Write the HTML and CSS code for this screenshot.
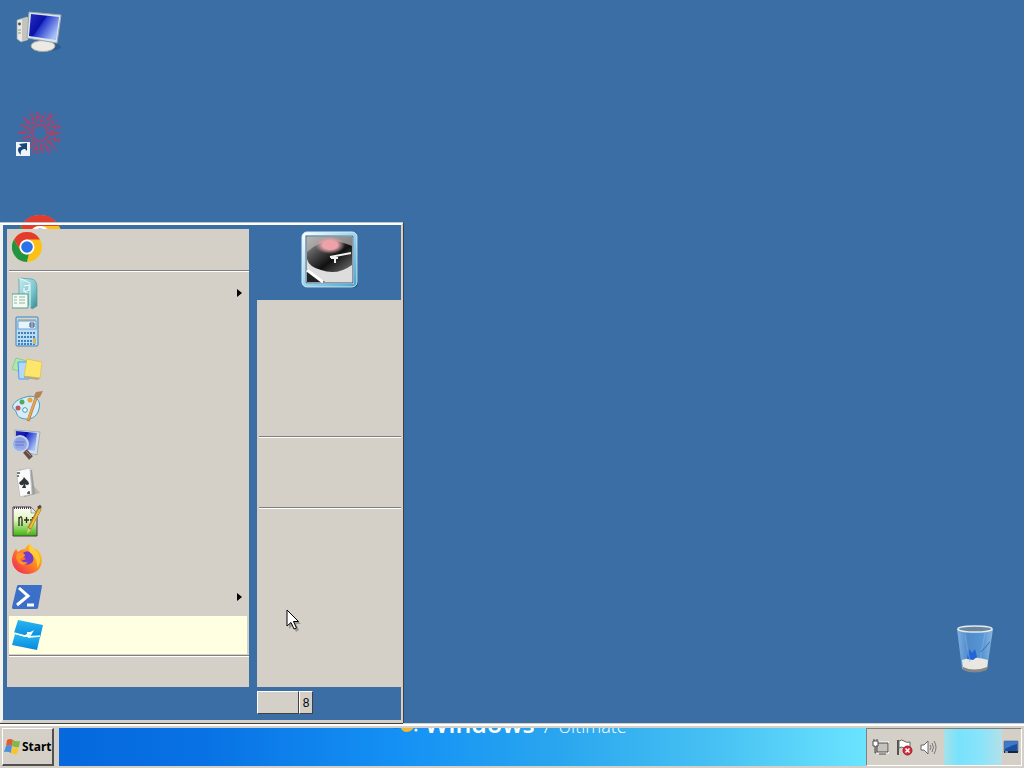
FILE: index.html
```html
<!DOCTYPE html>
<html lang="en">
<head>
<meta charset="utf-8">
<meta name="viewport" content="width=device-width, initial-scale=1">
<title>Desktop</title>
<link rel="stylesheet" href="styles.css">
</head>
<body>
<svg width="0" height="0" class="defs" aria-hidden="true">
  <defs>
    <symbol id="chrome" viewBox="0 0 30 30">
      <circle cx="15" cy="15" r="15" fill="#fbc116"/>
      <path d="M2 7.500A15 15 0 0 1 28 7.500H15A7.500 7.500 0 0 0 8.500 18.750Z" fill="#e33b2e"/>
      <path d="M2 7.500L8.500 18.750A7.500 7.500 0 0 0 17 22.200L15 30A15 15 0 0 1 2 7.500Z" fill="#229342"/>
      <path d="M15 30L21.500 18.750L17 22.200Z" fill="#fbc116"/>
      <circle cx="15" cy="15" r="7.500" fill="#fff"/><circle cx="15" cy="15" r="5.800" fill="#2b72e8"/>
    </symbol>
    <linearGradient id="screen" x1="0" y1="0" x2="1" y2=".6"><stop offset="0" stop-color="#2430c0"/><stop offset=".45" stop-color="#0c10a8"/><stop offset=".5" stop-color="#2438cc"/><stop offset="1" stop-color="#a8c0f8"/></linearGradient>
    <linearGradient id="teal" x1="0" y1="0" x2="1" y2="1"><stop offset="0" stop-color="#c8eef0"/><stop offset=".6" stop-color="#7cc4cc"/><stop offset="1" stop-color="#348890"/></linearGradient>
    <linearGradient id="green" x1="0" y1="0" x2="0" y2="1"><stop offset="0" stop-color="#fff"/><stop offset=".45" stop-color="#e0f4b8"/><stop offset="1" stop-color="#38b408"/></linearGradient>
    <linearGradient id="fire" x1="1" y1="0" x2="0" y2="1"><stop offset="0" stop-color="#ffe23c"/><stop offset=".45" stop-color="#ff8b20"/><stop offset="1" stop-color="#f0185c"/></linearGradient>
    <linearGradient id="vinyl" x1="0" y1="0" x2="1" y2="1"><stop offset="0" stop-color="#aaa"/><stop offset=".3" stop-color="#555"/><stop offset=".6" stop-color="#111"/><stop offset="1" stop-color="#777"/></linearGradient>
    <radialGradient id="label"><stop offset=".5" stop-color="#eca2a8"/><stop offset="1" stop-color="#c8a0a0" stop-opacity="0"/></radialGradient>
    <linearGradient id="frame" x1="0" y1="0" x2="1" y2="1"><stop offset="0" stop-color="#fff"/><stop offset=".5" stop-color="#9cd4ec"/><stop offset="1" stop-color="#48a4d0"/></linearGradient>
    <linearGradient id="glass" x1="0" y1="0" x2="1" y2="0"><stop offset="0" stop-color="#8cbcec"/><stop offset=".3" stop-color="#5490d0"/><stop offset=".7" stop-color="#5c9cdc"/><stop offset="1" stop-color="#98c4e8"/></linearGradient>
    <linearGradient id="cyan" x1="0" y1="0" x2="0" y2="1"><stop offset="0" stop-color="#28b8f0"/><stop offset="1" stop-color="#0888e0"/></linearGradient>
  </defs>
</svg>

<main class="desktop">
  <button class="shortcut computer" aria-label="Computer">
    <svg width="50" height="44" viewBox="0 0 50 44">
      <path d="M3 11L13 8V31L7 33L3 30Z" fill="#e8e8e4" stroke="#98a0a4" stroke-width=".7"/>
      <path d="M8 10L14 8V31L8 32Z" fill="#c4c4bc"/><circle cx="5.500" cy="15" r="1.400" fill="#405058"/>
      <path d="M4 21h3M4 24h3" stroke="#909898"/>
      <ellipse cx="32" cy="38" rx="15" ry="4" fill="#234c78" opacity=".5"/>
      <path d="M26 29L38 31L36 37H26Z" fill="#d0d4d0"/>
      <ellipse cx="29" cy="37" rx="12" ry="5.500" fill="#eceae4" stroke="#a8a8a0"/>
      <path d="M15 3L47 6L43 34L13 29Z" fill="#dce4ec" stroke="#98a8b4"/>
      <path d="M17 5L45 8L42 31L15 27Z" fill="url(#screen)"/>
    </svg>
  </button>
  <button class="shortcut spark" aria-label="Shortcut">
    <svg width="50" height="50" viewBox="0 0 50 50">
      <g fill="none" stroke="#c23a60" stroke-opacity=".85">
        <circle cx="26" cy="24" r="8" stroke-width="3" stroke-dasharray="2 1"/>
        <circle cx="26" cy="24" r="12" stroke-width="3" stroke-dasharray="3 2 1 2"/>
        <circle cx="26" cy="24" r="16" stroke-width="3" stroke-dasharray="2 3 3 3"/>
        <circle cx="26" cy="24" r="20" stroke-width="3" stroke-dasharray="1 5 2 6"/>
        <path d="M26 10V4M35 14L42 6M39 24H47M35 33L43 42M26 37V45M17 14L9 7M12 24H5M21 11L17 2M32 11L37 3M38 18L45 15M38 30L46 33M31 36L35 45M21 37L18 44M14 18L6 15"/>
      </g>
      <path d="M2 33H16V47H2Z" fill="#eef4fa"/>
      <path d="M7 46C2 42 4 37 8 38L5 35L13 34V42L11 40C8 40 6 42 7 46Z" fill="#174879"/>
    </svg>
  </button>
  <button class="shortcut browser" aria-label="Chrome"><svg width="44" height="44"><use href="#chrome"/></svg></button>
  <button class="shortcut bin" aria-label="Recycle Bin">
    <svg width="40" height="50" viewBox="0 0 40 50">
      <path d="M2 5L7 45Q19 51 32 45L38 5Z" fill="url(#glass)" opacity=".85"/>
      <path d="M7 36Q19 31 33 36L32 45Q19 50 8 45Z" fill="#e8e8e0"/><path d="M8 43Q19 48 32 43V46Q19 51 8 46Z" fill="#868888"/>
      <path d="M14 25l3 4 3-4 2 8-4 3-6-1z" fill="#2364d8"/><path d="M10 11L15 38M30 9L25 35" stroke="#86b4e4" opacity=".6"/>
      <path d="M26 28L35 18" stroke="#3a70a8"/>
      <ellipse cx="20" cy="5" rx="17" ry="3" fill="#6b859c" stroke="#e4eaee" stroke-width="1.500"/>
    </svg>
  </button>

  <section class="start-menu" aria-label="Start menu">
    <div class="programs">
      <button class="program pinned" aria-label="Chrome"><svg width="30" height="30"><use href="#chrome"/></svg></button>
      <hr class="rule">
      <button class="program" aria-label="Getting started">
        <svg width="30" height="34" viewBox="0 0 30 34"><path d="M7 2L20 3Q25 4 25 12V30L20 33L17 29L7 20Z" fill="url(#teal)" stroke="#4c9ca4" stroke-width=".7"/><path d="M7 2L18 7V31" fill="none" stroke="#e4fcfc"/><path d="M12 10l5-1v5l-5 2v-4M13 17h3" stroke="#fff" fill="none"/><path d="M0 18H16V32H0Z" fill="#f2faf2" stroke="#579d94"/><path d="M2 21h3M7 21h6M2 24h3M7 24h6M2 27h3M7 27h6" stroke="#8eb4a4"/></svg>
        <svg class="arrow" width="5" height="8"><path d="M0 0L5 4L0 8Z"/></svg>
      </button>
      <button class="program" aria-label="Calculator">
        <svg width="30" height="32" viewBox="0 0 30 32"><rect x="4" y="2" width="22" height="29" rx="1" fill="#bcdcf4" stroke="#3d83b5"/><path d="M6 4H24V6H6Z" fill="#c2b48e"/><rect x="6" y="6" width="18" height="8" fill="#e8f4fc" stroke="#6ba1c8"/><path d="M18 8h4v4h-4zM18 10h4" fill="none" stroke="#3d5389"/><path d="M6 18H24M6 22H24M6 26H24M6 29H24" stroke="#3e82bc" stroke-width="2" stroke-dasharray="2 1"/><path d="M21 23h3v6h-3z" fill="#c8b878"/></svg>
      </button>
      <button class="program" aria-label="Sticky Notes">
        <svg width="32" height="30" viewBox="0 0 32 30"><path d="M4 4L15 7L12 19L0 15Z" fill="#b0e8a8" stroke="#64c47c" stroke-width=".6"/><path d="M6 8H17V25H7Z" fill="#b4d8fc" stroke="#4c9cf0"/><path d="M15 5L30 8L28 24L12 22Z" fill="#fce66c" stroke="#d8b83c" stroke-width=".6"/><path d="M12 22L28 24L26 26L12 24Z" fill="#b7ab83"/></svg>
      </button>
      <button class="program" aria-label="Paint">
        <svg width="32" height="32" viewBox="0 0 32 32"><path d="M14 6C22 3 30 9 27 18C25 27 17 30 9 27C4 25 5 21 3 19C-2 17 1 9 14 6Z" fill="#d4edf6" stroke="#4b9cbd"/><circle cx="6" cy="17" r="2.500" fill="#b85864"/><circle cx="10" cy="11" r="2.500" fill="#4eaa60"/><circle cx="18" cy="9" r="2.500" fill="#e7a53a"/><circle cx="13" cy="19" r="2.300" fill="#fff" stroke="#4b97b0"/><path d="M16 30L24 7" stroke="#b87c3c" stroke-width="3"/><path d="M16 29L24 7" stroke="#e8a451" stroke-width="2"/><path d="M22 5L24 1L31 0L28 6L24 8Z" fill="#b48458"/></svg>
      </button>
      <button class="program" aria-label="Magnifier">
        <svg width="32" height="34" viewBox="0 0 32 34"><path d="M3 2L28 4L25 27L4 22Z" fill="#d2dfeb" stroke="#a3aeb8"/><path d="M4 3L25 5L23 23L4 20Z" fill="url(#screen)"/><circle cx="8" cy="16" r="8" fill="#9caee8" fill-opacity=".92" stroke="#c6d3e3" stroke-width="2"/><path d="M3 14H13M3 17H12" stroke="#5b7ccb"/><path d="M13 23L19 30" stroke="#644c48" stroke-width="5"/><path d="M13 22L19 28" stroke="#a98579"/></svg>
      </button>
      <button class="program" aria-label="Solitaire">
        <svg width="30" height="34" viewBox="0 0 30 34"><path d="M12 31L28 27L22 20Z" fill="#bab5ae"/><path d="M8 3L20 4L23 28L12 31Z" fill="#999e9e"/><path d="M4 5L18 2L20 28L8 31Z" fill="#fafafa" stroke="#c3c3c3"/><path d="M12 11C14 14 17 15 17 18Q15 20 13 18L14 22H10L12 18Q9 21 7 17C8 15 11 14 12 11Z" fill="#303638"/><path d="M5 7h3M6 9v2M17 25v3M15 27h3" stroke="#505454" stroke-width="1.500"/></svg>
      </button>
      <button class="program" aria-label="Notepad++">
        <svg width="32" height="34" viewBox="0 0 32 34"><path d="M1 3H19L25 9V32H1Z" fill="url(#green)" stroke="#535" stroke-width="1"/><path d="M2 4H19" stroke="#444" stroke-dasharray="1 1" stroke-width="2"/><path d="M19 3V9H25Z" fill="#e7e7e7" stroke="#777" stroke-width=".6"/><path d="M7 22V13M7 15Q10 10 10 16V22M12 16H17M14.500 13V19M18 16H23M20.500 13V19" fill="none" stroke="#252d20" stroke-width="1.300"/><path d="M17 25L28 4" stroke="#a8842c" stroke-width="4"/><path d="M18 24L28 5" stroke="#f0bb36" stroke-width="2"/><path d="M26 4L29 2" stroke="#54483c" stroke-width="3"/><path d="M16 24L19 26L15 30Z" fill="#e6bf8c"/></svg>
      </button>
      <button class="program" aria-label="Firefox">
        <svg width="30" height="32" viewBox="0 0 30 32"><path d="M4 6L6 9Q9 6 13 6Q15 2 18 1Q20 5 23 7V5Q30 10 30 17C30 26 23 31 15 31S0 25 0 17Q0 11 4 6Z" fill="url(#fire)"/><path d="M9 12Q15 5 20 11Q24 18 18 21Q12 23 9 18L14 16Z" fill="#743bd1"/><path d="M5 10Q13 9 13 13L8 16Q10 20 16 19Q11 25 6 19Q3 15 5 10Z" fill="#ff9426"/><path d="M18 1Q20 5 25 9Q31 17 25 25Q26 17 20 11Q15 8 18 1Z" fill="#ffcf3a"/></svg>
      </button>
      <button class="program" aria-label="PowerShell">
        <svg width="32" height="26" viewBox="0 0 32 26"><path d="M6 1H29Q30 1 30 2L26 24Q26 25 24 25H1Q0 25 0 23L5 2Z" fill="#3c70c8"/><path d="M7 4L16 12L5 21M15 21H22" fill="none" stroke="#fff" stroke-width="3"/></svg>
        <svg class="arrow" width="5" height="8"><path d="M0 0L5 4L0 8Z"/></svg>
      </button>
      <button class="program selected" aria-label="Snap">
        <svg width="31" height="32" viewBox="0 0 31 32"><path d="M6 1L31 6L28 19L17 16L19 13H15V17L2 14Z" fill="url(#cyan)"/><path d="M3 15L13 18H17L18 15L28 18L25 31L0 26Z" fill="url(#cyan)"/><path d="M2 14L13 17L20 13L17 18L28 17" fill="none" stroke="#f0ffff" stroke-width="1.500"/></svg>
      </button>
      <hr class="rule">
    </div>
    <div class="places">
      <div class="portrait">
        <svg width="58" height="58" viewBox="0 0 58 58"><rect x="2" y="3" width="55" height="54" rx="5" fill="#244a70"/><rect x="1" y="1" width="55" height="55" rx="5" fill="url(#frame)" stroke="#c9efff"/><rect x="4" y="4" width="49" height="49" fill="#fff"/><rect x="5" y="5" width="47" height="47" fill="#ddd" stroke="#27587c"/><path d="M6 6H51V34Q36 45 20 39Q8 36 6 28Z" fill="url(#vinyl)"/><path d="M6 6H51V15Q25 3 6 21Z" fill="#b9b7b7" opacity=".7"/><ellipse cx="29" cy="14" rx="15" ry="9" fill="url(#label)"/><path d="M29 26L50 22M30 27H37M34 26V32" stroke="#f1f1f1" stroke-width="2"/><path d="M6 38L24 51H6Z" fill="#222"/><path d="M6 39L22 51" stroke="#fff" stroke-width="3"/></svg>
      </div>
      <nav class="links" aria-label="Places">
        <div class="group folders"></div><hr class="rule">
        <div class="group games"></div><hr class="rule">
        <div class="group settings"></div>
      </nav>
      <div class="power">
        <button class="shutdown" aria-label="Shut down"></button><button class="more">8</button>
      </div>
    </div>
  </section>
  <svg class="pointer" width="16" height="24" viewBox="0 0 16 24" aria-hidden="true"><path d="M3 3V20L7 16L10 23L13 21L10 15H15Z" fill="#0004"/><path d="M1 1V17L5 13.500L8 20L10.500 19L7.500 12.500H12.500Z" fill="#fff" stroke="#000"/></svg>
</main>

<footer class="taskbar">
  <button class="start">
    <svg width="17" height="17" viewBox="0 0 17 17"><path d="M3 2Q6 0 9 2L8 8Q5 6 2 8Z" fill="#e35b2d"/><path d="M9 2Q12 4 16 3L15 9Q12 10 8 8Z" fill="#83b74b"/><path d="M2 8Q5 6 8 8L7 15Q4 13 0 14Z" fill="#4a8fe0"/><path d="M8 9Q12 11 15 9L13 16Q10 17 7 15Z" fill="#f7c52d"/></svg>
    Start
  </button>
  <div class="band">
    <div class="edition"><svg class="flag" width="28" height="8" viewBox="0 0 28 8"><path d="M0 1Q5 4 9 2V1Z" fill="#2c75b4"/><path d="M11 1H24Q22 6 16 6Q11 5 11 1Z" fill="#f2b632"/><circle cx="26" cy="4" r="1.500" fill="#fff"/></svg><span class="brand">Windows</span><span class="seven">7</span><span class="tier">Ultimate</span></div>
  </div>
  <div class="tray">
    <button class="tray-item" aria-label="Network"><svg width="17" height="17" viewBox="0 0 17 17"><path d="M5 4H16V13H5Z" fill="#d4d0c8" stroke="#fff" stroke-width="3"/><path d="M5 4H16V13H5ZM7 15H14" fill="#c6c3bd" stroke="#4d4d4d"/><path d="M1 2H6V7H4V14H3V7H1Z" fill="#fff" stroke="#4d4d4d"/><path d="M2 0V2M5 0V2" stroke="#444"/></svg></button>
    <button class="tray-item" aria-label="Action center"><svg width="17" height="17" viewBox="0 0 17 17"><path d="M2 1V16" stroke="#555" stroke-width="2"/><path d="M3 2Q6 0 8 2T14 3V10Q10 11 8 9T3 9Z" fill="#fff" stroke="#666"/><circle cx="11.500" cy="11.500" r="4.500" fill="#d52c3c" stroke="#992333"/><path d="M9.500 9.500L13.500 13.500M13.500 9.500L9.500 13.500" stroke="#fff" stroke-width="1.500"/></svg></button>
    <button class="tray-item" aria-label="Volume"><svg width="17" height="17" viewBox="0 0 17 17"><path d="M1 6H4L8 2V15L4 11H1Z" fill="#fff" stroke="#666"/><path d="M10 6Q12 8 10 11M12 4Q15 8 12 13M14 2Q18 8 14 15" fill="none" stroke="#777"/></svg></button>
    <div class="clock"></div>
    <button class="show-desktop" aria-label="Show desktop"><svg width="16" height="14" viewBox="0 0 16 14"><path d="M1 1H15V12H1Z" fill="#1c4ea0" stroke="#788ba7"/><path d="M2 2H14V4Q9 5 2 9Z" fill="#397bd0"/><path d="M1 12H15" stroke="#17243c" stroke-width="2"/><path d="M2 12h3" stroke="#e8f8ff"/></svg></button>
  </div>
</footer>
</body>
</html>
```

FILE: styles.css
```css
* { box-sizing: border-box; }
body {
  margin: 0;
  min-height: 100vh;
  display: flex;
  flex-direction: column;
  background: #3a6ea5;
  color: #000;
  font: 12px "Noto Sans", sans-serif;
}
button { margin: 0; padding: 0; border: 0; background: none; color: inherit; font: inherit; }
svg { display: block; flex: none; }
.defs { position: absolute; }

.desktop { position: relative; flex: 1; min-height: 520px; overflow: hidden; }
.shortcut { position: absolute; }
.computer { left: 14px; top: 9px; }
.spark { left: 14px; top: 109px; }
.browser { left: 18px; top: 215px; }
.bin { right: 29px; bottom: 50px; }
.pointer { position: absolute; left: 286px; top: 609px; }

.start-menu {
  position: absolute;
  left: 0;
  bottom: 1px;
  display: flex;
  gap: 8px;
  width: 403px;
  padding: 4px 0 0 4px;
  border: solid;
  border-width: 2px 2px 3px 3px;
  border-color: #fff #d4d0c8 #d4d0c8 #f4f3f0;
  background: linear-gradient(#d4d0c8, #d4d0c8) 4px 4px / 242px 458px no-repeat;
  box-shadow: 0 -1px #b8c4cc, 1px 0 #404040, 0 1px #404040;
}
.programs { flex: 0 0 242px; padding: 0 0 0 2px; display: flex; flex-direction: column; }
.program { display: flex; align-items: center; justify-content: space-between; height: 38px; padding: 0 7px 0 3px; }
.pinned { height: 36px; }
.pinned + .rule { margin: 5px 0 2px; }
.selected { margin-right: 2px; background: #ffffe1; }
.rule { width: 100%; height: 2px; margin: 1px 0; border: 0; border-top: 1px solid #808080; border-bottom: 1px solid #fff; }
.places { flex: 1; display: flex; flex-direction: column; }
.portrait { display: flex; justify-content: center; height: 71px; padding: 2px 0 0 1px; }
.links { padding-left: 2px; background: #d4d0c8; }
.links .rule { margin: 0; }
.folders { height: 136px; }
.games { height: 69px; }
.settings { height: 178px; }
.power { display: flex; height: 33px; padding: 4px 0 6px; }
.shutdown, .more { border: 1px solid #fff; border-right-color: #404040; border-bottom-color: #404040; background: #d4d0c8; }
.shutdown { width: 42px; }
.more { width: 14px; font-family: "Liberation Sans", sans-serif; }

.taskbar {
  display: flex;
  height: 44px;
  padding: 2px;
  border-top: 2px solid #fff;
  background: #d4d0c8;
  box-shadow: 0 -1px #d4d0c8;
}
.start {
  display: flex;
  align-items: center;
  gap: 1px;
  width: 52px;
  margin-right: 5px;
  padding-left: 1px;
  border: 1px solid #fff;
  border-right: 2px solid #505050;
  border-bottom: 2px solid #505050;
  font-weight: 700;
}
.band { flex: 1; background: linear-gradient(90deg, #0568dd 0%, #0872e4 18%, #1592f5 43%, #2aa6ef 62%, #48c2f3 82%, #6be4ff 100%); overflow: hidden; }
.edition { display: flex; align-items: baseline; height: 21px; margin-top: -15px; padding-left: 41%; color: #fff; font-family: "Open Sans", sans-serif; line-height: 20px; white-space: nowrap; }
.flag { align-self: flex-end; }
.brand { margin-left: 7px; font-size: 25px; font-weight: 600; }
.seven { margin-left: 6px; font-size: 20px; font-weight: 300; }
.tier { margin-left: 6px; font-size: 18px; font-weight: 300; }
.tray {
  display: flex;
  align-items: center;
  flex: 0 0 156px;
  padding-left: 5px;
  border: 1px solid #808080;
  border-right-color: #fff;
  border-bottom-color: #fff;
}
.tray-item { width: 24px; }
.clock { flex: 1; align-self: stretch; background: linear-gradient(90deg, #a4e2e8, #78e2fc 25%, #8ae4fa 65%, #b4e0e8); }
.show-desktop { width: 19px; padding-left: 1px; }
```
